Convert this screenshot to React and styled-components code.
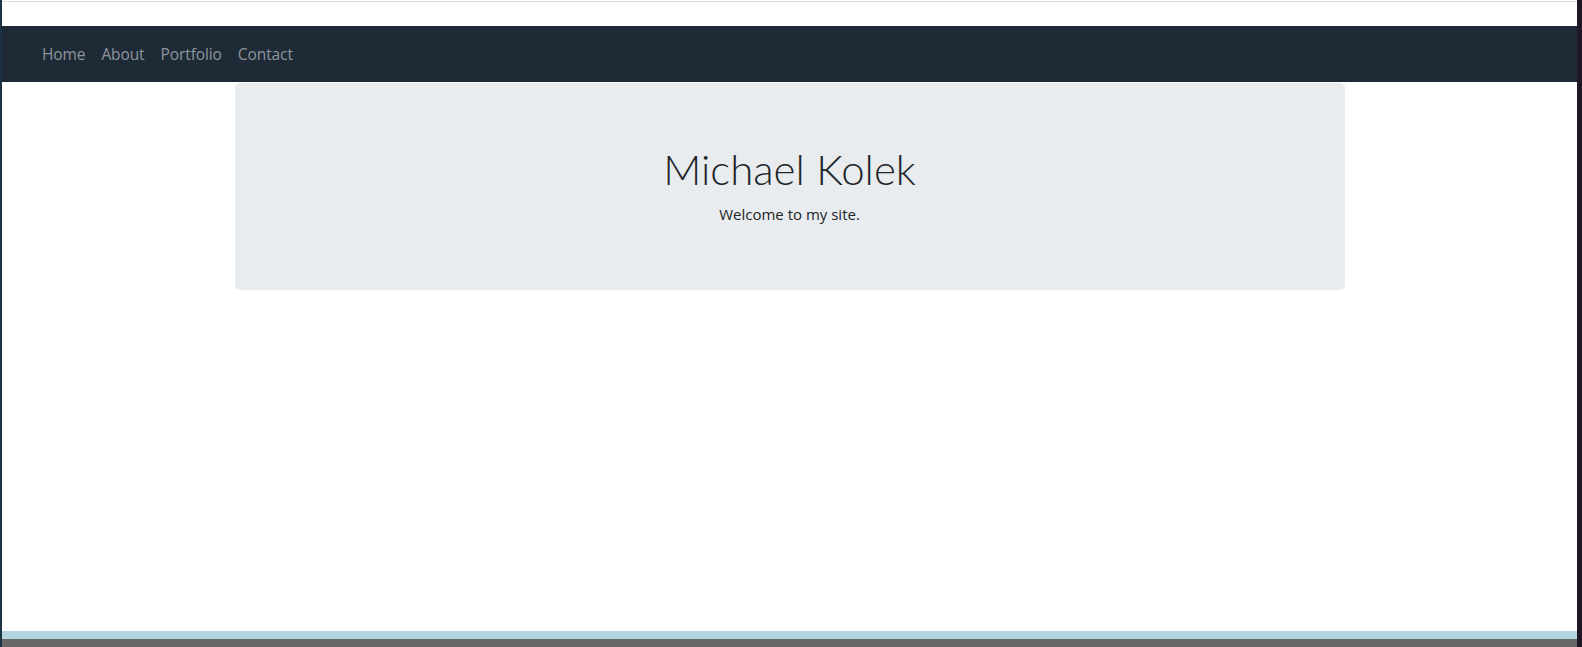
import styled, { createGlobalStyle } from 'styled-components'

const GlobalStyle = createGlobalStyle`
  html, body {
    margin: 0;
    padding: 0;
    background: #ffffff;
  }
  body {
    font-family: "Open Sans", "Noto Sans", sans-serif;
    color: #212529;
  }
`

const links = ['Home', 'About', 'Portfolio', 'Contact']

export default function App() {
  return (
    <>
      <GlobalStyle />
      <Frame>
        <Page>
          <TopStrip />
          <NavBar>
            {links.map(l => (
              <NavLink key={l} href="#">{l}</NavLink>
            ))}
          </NavBar>
          <Main>
            <Jumbotron>
              <Title>Michael Kolek</Title>
              <Lead>Welcome to my site.</Lead>
            </Jumbotron>
          </Main>
          <Footer>
            <Band $color="#b3d5e0" />
            <Band $color="#686868" />
          </Footer>
        </Page>
      </Frame>
    </>
  )
}

const Frame = styled.div`
  display: flex;
  height: 647px;
  border-left: 2px solid #1d3344;
  border-right: 5px solid #1f1726;
  box-sizing: border-box;
`
const Page = styled.div`
  flex: 1;
  display: flex;
  flex-direction: column;
  min-width: 0;
`
const TopStrip = styled.div`
  height: 24px;
  margin-top: 1px;
  border-top: 1px solid #d9d9d9;
  background: #fff;
`
const NavBar = styled.nav`
  height: 56px;
  background: #1f2a37;
  display: flex;
  align-items: center;
  padding-left: 32px;
`
const NavLink = styled.a`
  color: #8e959c;
  text-decoration: none;
  font-size: 15.5px;
  padding: 0 8px;
  letter-spacing: -0.1px;
`
const Main = styled.main`
  flex: 1;
  display: flex;
  justify-content: center;
  align-items: flex-start;
  padding-top: 1px;
`
const Jumbotron = styled.section`
  width: 1110px;
  height: 207px;
  box-sizing: border-box;
  background: #e9ecef;
  border-radius: 5px;
  display: flex;
  flex-direction: column;
  align-items: center;
  padding-top: 62px;
`
const Title = styled.h1`
  margin: 0;
  font-family: "Lato", "Noto Sans", sans-serif;
  font-weight: 300;
  font-size: 42px;
  line-height: 48px;
  color: #212529;
`
const Lead = styled.p`
  margin: 11px 0 0;
  font-size: 15px;
  color: #212529;
`
const Footer = styled.footer`
  display: flex;
  flex-direction: column;
`
const Band = styled.div`
  height: 8px;
  background: ${({ $color }) => $color};
`
